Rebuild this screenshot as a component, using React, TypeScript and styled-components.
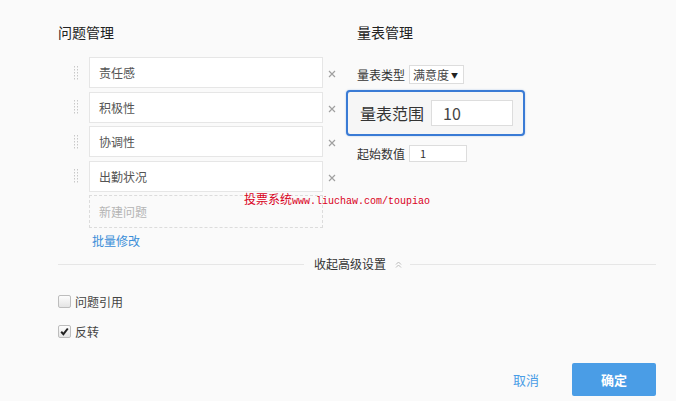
import styled, { createGlobalStyle } from "styled-components";

const GlobalStyle = createGlobalStyle`
  html, body {
    margin: 0;
    padding: 0;
    background: #fafafa;
  }
  body {
    font-family: "Noto Sans CJK SC", "Noto Sans", sans-serif;
    color: #333;
  }
`;

const Page = styled.div`
  position: relative;
  width: 676px;
  height: 401px;
  box-sizing: border-box;
  padding: 25px 20px 0 58px;
  overflow: hidden;
`;

const Columns = styled.div`
  display: flex;
`;

const LeftCol = styled.div`
  width: 299px;
  display: flex;
  flex-direction: column;
`;

const RightCol = styled.div`
  flex: 1;
  display: flex;
  flex-direction: column;
`;

const Heading = styled.div`
  font-size: 14px;
  line-height: 14px;
  font-weight: 400;
  color: #222;
  margin-bottom: ${(p: { $gap: number }) => p.$gap}px;
`;

const List = styled.div`
  padding-left: 16px;
  display: flex;
  flex-direction: column;
`;

const Row = styled.div`
  display: flex;
  align-items: center;
  height: 31px;
  margin-bottom: 3.5px;
`;

const Handle = styled.div`
  width: 15px;
  display: flex;
  align-items: center;
`;

const ItemBox = styled.div`
  width: 234px;
  height: 31px;
  box-sizing: border-box;
  border: 1px solid #e6e6e6;
  background: #fff;
  padding-left: 9px;
  font-size: 12px;
  line-height: 29px;
  color: #555;
`;

const Close = styled.div`
  margin-left: 5px;
  margin-top: 3px;
  display: flex;
`;

const NewBox = styled(ItemBox)`
  margin-left: 15px;
  height: 33px;
  line-height: 31px;
  border: 1px dashed #dcdcdc;
  background: transparent;
  color: #b5b5b5;
`;

const LinkText = styled.div`
  margin: 7px 0 0 34px;
  font-size: 12px;
  line-height: 12px;
  color: #3b8ed8;
`;

const Divider = styled.div`
  margin-top: 10px;
  display: flex;
  align-items: center;
  height: 14px;
  font-size: 12px;
  line-height: 14px;
  color: #333;
`;

const Line = styled.div`
  flex: 1;
  height: 1px;
  background: #e6e6e6;
`;

const DividerLabel = styled.div`
  display: flex;
  align-items: center;
  padding: 0 8px 0 10px;
  gap: 9px;
`;

const CheckRow = styled.label`
  display: flex;
  align-items: center;
  height: 16px;
  margin-top: ${(p: { $top: number }) => p.$top}px;
  font-size: 12px;
  color: #444;
  gap: 4px;
`;

const CheckBox = styled.span`
  width: 11px;
  height: 11px;
  border: 1px solid #bdbdbd;
  border-radius: 2px;
  background: linear-gradient(#fdfdfd, #e4e4e4);
  display: flex;
  align-items: center;
  justify-content: center;
`;

const Footer = styled.div`
  margin-top: 24px;
  display: flex;
  justify-content: flex-end;
  align-items: center;
  gap: 33px;
`;

const CancelButton = styled.div`
  font-size: 13px;
  color: #4a9de6;
`;

const OkButton = styled.div`
  width: 84px;
  height: 33px;
  background: #4a9de6;
  border-radius: 2px;
  color: #fff;
  font-size: 13px;
  font-weight: 700;
  display: flex;
  align-items: center;
  justify-content: center;
`;

const FieldRow = styled.div`
  display: flex;
  align-items: center;
  gap: 4px;
  font-size: 12px;
  color: #333;
  height: ${(p: { $h: number }) => p.$h}px;
`;

const SelectBox = styled.div`
  width: 55px;
  height: 19px;
  box-sizing: border-box;
  border: 1px solid #ddd;
  background: #fff;
  display: flex;
  align-items: center;
  justify-content: space-between;
  padding: 0 5px 0 3px;
  font-size: 12px;
  color: #444;
`;

const Caret = styled.span`
  font-size: 7px;
  color: #222;
`;

const SmallInput = styled.div`
  width: 58px;
  height: 17px;
  box-sizing: border-box;
  border: 1px solid #ddd;
  background: #fff;
  padding-left: 10px;
  font-size: 11px;
  line-height: 15px;
  color: #333;
`;

const FocusBox = styled.div`
  margin: 6px 0 9px -11px;
  width: 179px;
  height: 46px;
  box-sizing: border-box;
  border: 2px solid #3a7bd5;
  border-radius: 4px;
  background: #f6f6f6;
  box-shadow: 0 0 2px rgba(58, 123, 213, 0.4);
  display: flex;
  align-items: center;
  padding: 0 10px 0 12px;
  gap: 7px;
  font-size: 16px;
  color: #333;
`;

const BigInput = styled.div`
  flex: 1;
  height: 26px;
  box-sizing: border-box;
  border: 1px solid #ddd;
  background: #fff;
  padding-left: 11px;
  font-size: 16px;
  line-height: 24px;
  color: #444;
`;

const Watermark = styled.div`
  position: absolute;
  left: 244px;
  top: 192px;
  color: #d9001b;
  font-size: 12px;
  line-height: 14px;
  white-space: nowrap;
  font-family: "Noto Sans CJK SC", sans-serif;
`;

const WatermarkUrl = styled.span`
  font-family: "Liberation Mono", monospace;
  font-size: 10px;
`;

const DragIcon = () => (
  <svg width="5" height="16" viewBox="0 0 5 16">
    {[0, 1, 2, 3, 4].map((r) => (
      <g key={r} fill="#c8c8c8">
        <rect x="0" y={r * 3 + 1} width="1" height="1.5" />
        <rect x="3" y={r * 3 + 1} width="1" height="1.5" />
      </g>
    ))}
  </svg>
);

const CloseIcon = () => (
  <svg width="8" height="8" viewBox="0 0 8 8">
    <path d="M1 1L7 7M7 1L1 7" stroke="#a0a0a0" strokeWidth="1.2" />
  </svg>
);

const UpIcon = () => (
  <svg width="7" height="7" viewBox="0 0 7 7">
    <path d="M1 3.5L3.5 1L6 3.5M1 6.5L3.5 4L6 6.5" stroke="#bbb" fill="none" strokeWidth="1" />
  </svg>
);

const CheckMark = () => (
  <svg width="9" height="9" viewBox="0 0 9 9">
    <path d="M1.2 4.8L3.4 7.2L7.8 1.5" stroke="#222" fill="none" strokeWidth="2" />
  </svg>
);

const items = ["责任感", "积极性", "协调性", "出勤状况"];

export default function App() {
  return (
    <>
      <GlobalStyle />
      <Page>
        <Columns>
          <LeftCol>
            <Heading $gap={18}>问题管理</Heading>
            <List>
              {items.map((t) => (
                <Row key={t}>
                  <Handle>
                    <DragIcon />
                  </Handle>
                  <ItemBox>{t}</ItemBox>
                  <Close>
                    <CloseIcon />
                  </Close>
                </Row>
              ))}
              <NewBox>新建问题</NewBox>
            </List>
            <LinkText>批量修改</LinkText>
          </LeftCol>
          <RightCol>
            <Heading $gap={26}>量表管理</Heading>
            <FieldRow $h={19}>
              量表类型
              <SelectBox>
                满意度<Caret>▼</Caret>
              </SelectBox>
            </FieldRow>
            <FocusBox>
              量表范围
              <BigInput>10</BigInput>
            </FocusBox>
            <FieldRow $h={17}>
              起始数值
              <SmallInput>1</SmallInput>
            </FieldRow>
          </RightCol>
        </Columns>
        <Divider>
          <Line />
          <DividerLabel>
            收起高级设置
            <UpIcon />
          </DividerLabel>
          <Line />
        </Divider>
        <CheckRow $top={22}>
          <CheckBox />
          问题引用
        </CheckRow>
        <CheckRow $top={14}>
          <CheckBox>
            <CheckMark />
          </CheckBox>
          反转
        </CheckRow>
        <Footer>
          <CancelButton>取消</CancelButton>
          <OkButton>确定</OkButton>
        </Footer>
        <Watermark>
          投票系统<WatermarkUrl>www.liuchaw.com/toupiao</WatermarkUrl>
        </Watermark>
      </Page>
    </>
  );
}
